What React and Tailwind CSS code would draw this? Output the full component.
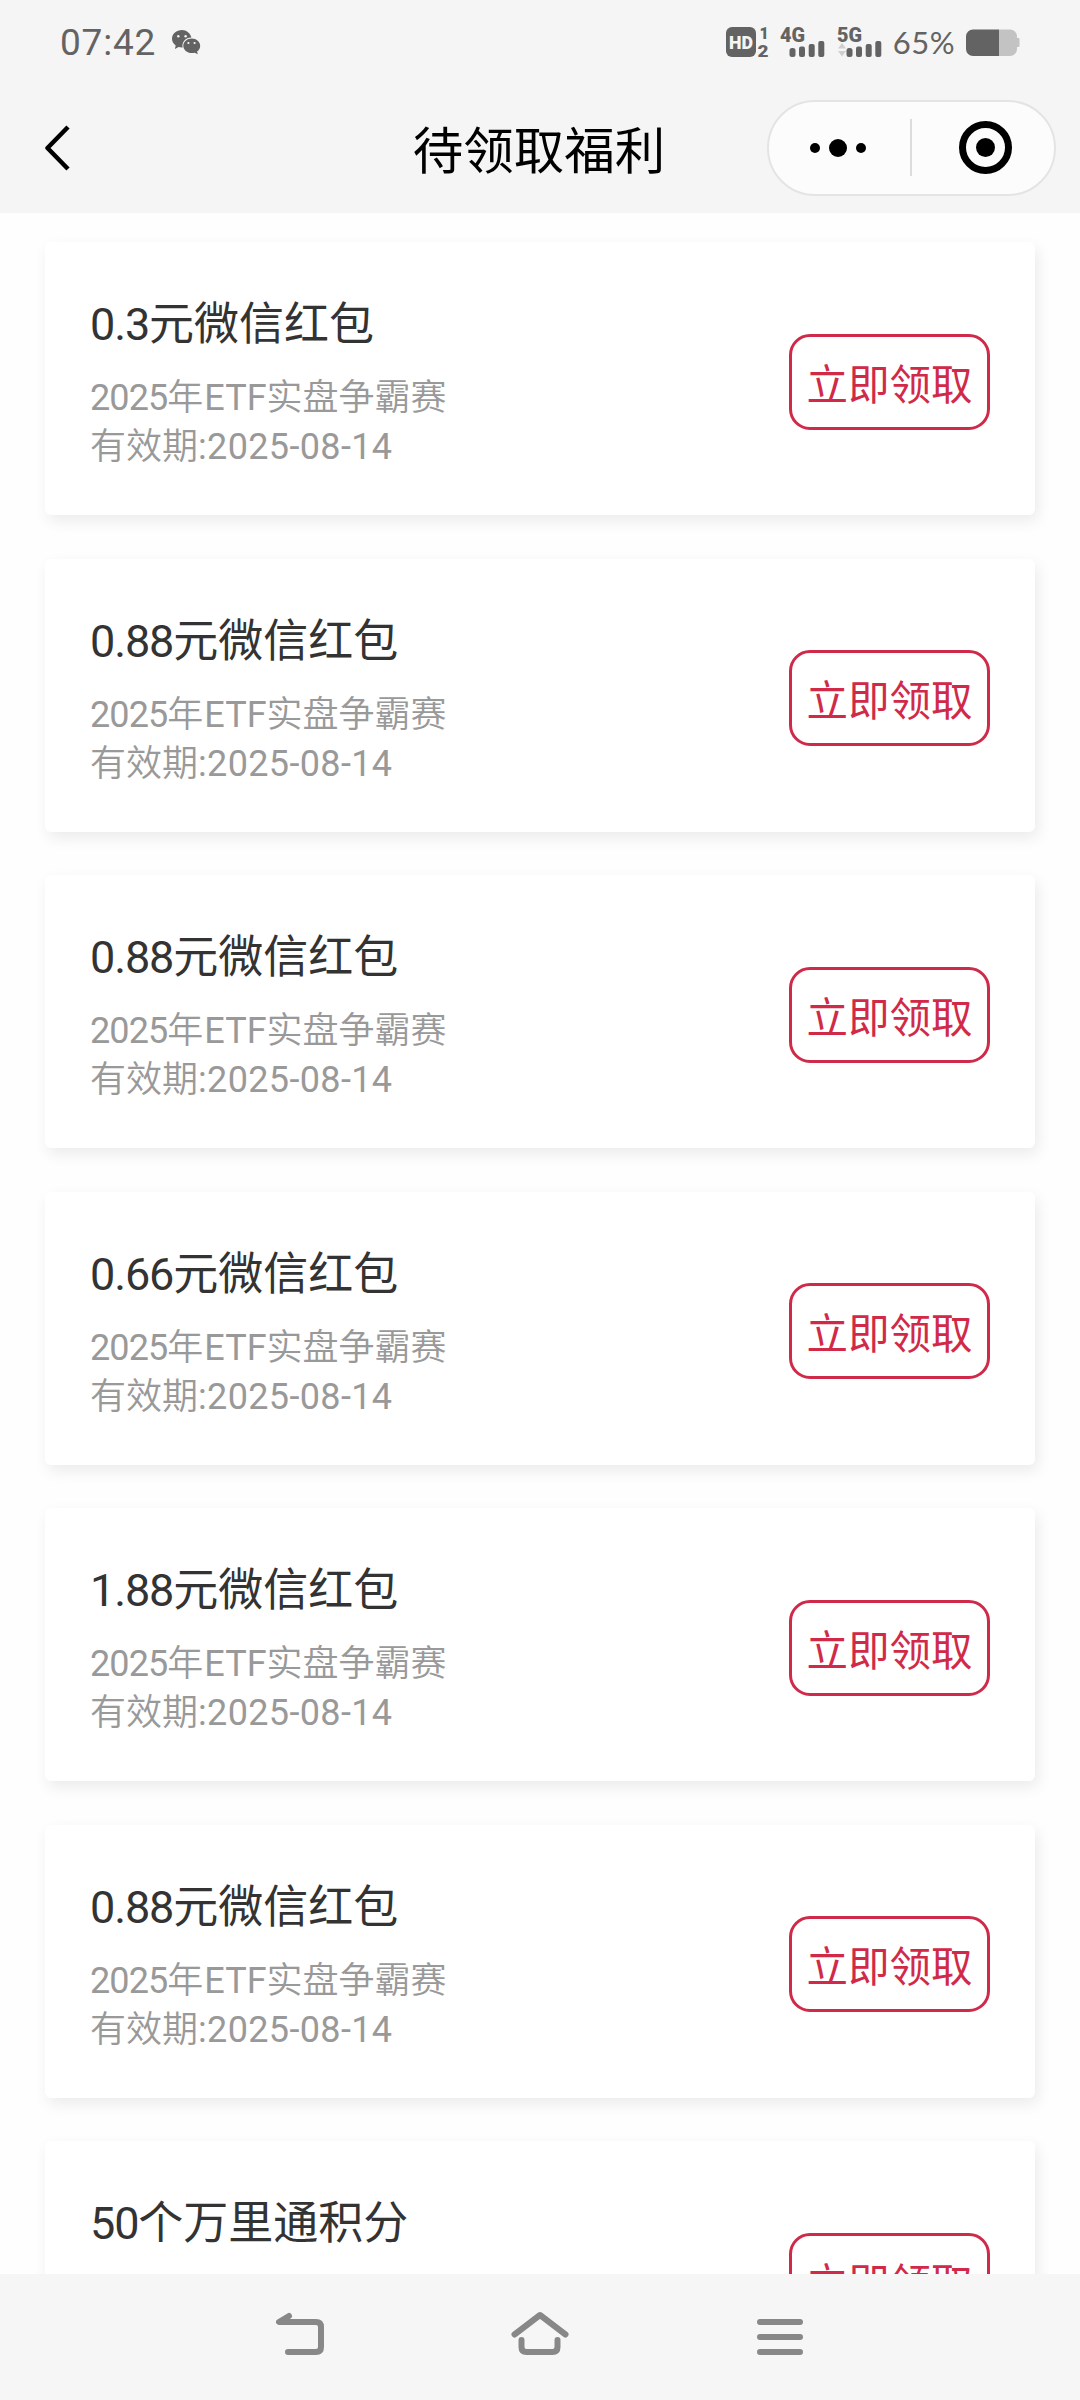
import React from 'react';

const rewards = [
  { id: 1, title: '0.3元微信红包' },
  { id: 2, title: '0.88元微信红包' },
  { id: 3, title: '0.88元微信红包' },
  { id: 4, title: '0.66元微信红包' },
  { id: 5, title: '1.88元微信红包' },
  { id: 6, title: '0.88元微信红包' },
  { id: 7, title: '50个万里通积分' },
];

// Digits and latin letters use a narrower face than the Chinese text
const Mixed = ({ text, latin }) =>
  text.split(/([0-9.:-]+|[A-Z]+)/).filter(Boolean).map((part, i) =>
    /^[A-Z]/.test(part) ? (
      <span key={i} className="pl-[1px] font-['Roboto'] font-normal leading-none">{part}</span>
    ) : /^[0-9.:-]/.test(part) ? (
      <span key={i} className={`font-['Roboto'] leading-none ${latin}`}>{part}</span>
    ) : (
      <span key={i}>{part}</span>
    )
  );

const WeChatIcon = () => (
  <svg width="29" height="25" viewBox="0 0 29 25" className="ml-[16px]">
    <path fill="#636363" d="M10 0C4.500 0 0 3.900 0 8.800c0 2.700 1.400 5 3.700 6.700L2.900 19l3.700-2c1.100.3 2.200.5 3.400.5h.6C9.500 12 13.500 7.600 19.400 7.500 18.400 3.200 14.500 0 10 0z" />
    <path fill="#636363" d="M19.800 8.500c-4.800 0-8.500 3.300-8.500 7.300s3.700 7.300 8.500 7.300c1 0 2-.2 2.900-.4l3.100 1.600-.7-2.700c1.900-1.400 3.100-3.400 3.100-5.800 0-4-3.800-7.300-8.400-7.300z" />
    <g fill="#f5f5f5">
      <circle cx="6.300" cy="6.300" r="1.200" />
      <circle cx="13.600" cy="6.300" r="1.200" />
      <circle cx="16.400" cy="13" r="1.100" />
      <circle cx="22.600" cy="13" r="1.100" />
    </g>
  </svg>
);

const HdIcon = () => (
  <svg width="44" height="32" viewBox="0 0 44 32" fill="#636363" fontFamily="Roboto, sans-serif" fontWeight="900" className="overflow-visible">
    <rect x="0" y="1" width="30" height="30" rx="6" />
    <text x="3" y="22.500" fontSize="18" fill="#f5f5f5" textLength="24" lengthAdjust="spacingAndGlyphs">HD</text>
    <text x="33.500" y="12.500" fontSize="16" fontWeight="900">1</text>
    <text x="31.500" y="30.500" fontSize="16" fontWeight="900" textLength="11" lengthAdjust="spacingAndGlyphs">2</text>
  </svg>
);

const Signal = ({ label, data }) => (
  <svg width="46" height="32" viewBox="0 0 46 32" fill="#636363" className="overflow-visible">
    <text x="0" y="15.500" fontSize="20" fontWeight="900" fontFamily="Roboto, sans-serif" textLength="25" lengthAdjust="spacingAndGlyphs">{label}</text>
    {data && <path fill="#cfcfcf" d="M1 22.500l4-5.500 4 5.500zM1 25h8l-4 5.500z" />}
    <rect x="9.500" y="22" width="6" height="9" rx="2.500" />
    <rect x="19" y="20.500" width="6" height="10.500" rx="2" />
    <rect x="28.700" y="18" width="6" height="13" rx="2" />
    <rect x="38.300" y="15" width="6" height="16" rx="2" />
  </svg>
);

const BatteryIcon = () => (
  <svg width="54" height="28" viewBox="0 0 54 28" className="ml-[11px] mt-[2px]">
    <path fill="#c3c3c3" d="M33 .5h11a7 7 0 0 1 7 7v1.500h1.500q1 0 1 1v7q0 1-1 1H51v2a7 7 0 0 1-7 7H33z" />
    <path fill="#636363" d="M7 .5h26v26.500H7a7 7 0 0 1-7-7V7.500a7 7 0 0 1 7-7z" />
  </svg>
);

const StatusBar = () => (
  <div className="flex h-[84px] items-center pl-[60px] pr-[60px] text-[#636363]">
    <span className="font-['Roboto'] text-[37px] leading-none tracking-[0.8px]">07:42</span>
    <WeChatIcon />
    <div className="ml-auto flex items-center">
      <HdIcon />
      <div className="ml-[10px]"><Signal label="4G" /></div>
      <div className="ml-[11px]"><Signal label="5G" data /></div>
      <span className="ml-[10px] mt-[1px] font-['Lato'] text-[31px] leading-none tracking-[0.5px]">65%</span>
      <BatteryIcon />
    </div>
  </div>
);

const NavBar = () => (
  <div className="grid h-[129px] grid-cols-[349px_1fr_349px] items-center">
    <svg width="26" height="46" viewBox="0 0 26 46" fill="none" stroke="#000" strokeWidth="4.500" className="mb-[1px] ml-[45px]">
      <path d="M23 2L2.500 23 23 44" strokeLinejoin="round" />
    </svg>
    <h1 className="mb-[3px] mr-[2px] text-center text-[50.500px] leading-[64px] text-black">待领取福利</h1>
    <div className="mb-[2px] ml-[36px] flex h-[96px] w-[289px] items-center rounded-full border-2 border-[#e4e4e4] bg-[#fcfcfc]">
      <div className="flex w-[141px] items-center justify-center gap-[9px] pr-[3px]">
        <span className="size-[10px] rounded-full bg-black" />
        <span className="size-[18px] rounded-full bg-black" />
        <span className="size-[10px] rounded-full bg-black" />
      </div>
      <span className="h-[57px] w-[2px] bg-[#dcdcdc]" />
      <div className="flex flex-1 justify-center pl-[4px]">
        <span className="flex size-[53px] items-center justify-center rounded-full border-[7px] border-black">
          <span className="size-[19px] rounded-full bg-black" />
        </span>
      </div>
    </div>
  </div>
);

const RewardCard = ({ title }) => (
  <div className="flex h-[273px] shrink-0 items-center justify-between rounded-[6px] bg-white px-[45px] shadow-[3px_6px_15px_rgba(0,0,0,0.08)]">
    <div>
      <h2 className="mb-[17px] text-[45px] leading-[64px] text-[#333]">
        <Mixed text={title} latin="font-[450] tracking-[-0.025em]" />
      </h2>
      <p className="text-[36px] font-[350] leading-[49px] text-[#999]">
        <Mixed text="2025年ETF实盘争霸赛" latin="font-normal tracking-[-0.025em]" />
      </p>
      <p className="text-[36px] font-[350] leading-[49px] text-[#999]">
        <Mixed text="有效期:2025-08-14" latin="font-normal tracking-[0.01em]" />
      </p>
    </div>
    <button className="mt-[6px] h-[96px] w-[201px] rounded-[21px] border-3 border-[#cf2a49] pt-[2px] text-[41.500px] leading-none text-[#d12a49]">
      立即领取
    </button>
  </div>
);

const BottomBar = () => (
  <div className="flex h-[126px] items-start gap-[187px] bg-[#f6f6f6] pl-[276px] pt-[37px]">
    <svg width="48" height="46" viewBox="0 0 48 46" fill="none" stroke="#888" strokeWidth="6" strokeLinecap="round" strokeLinejoin="round">
      <path d="M13 5L3 11h37q5 0 5 5v20q0 5-5 5H12" />
    </svg>
    <svg width="58" height="46" viewBox="0 0 58 46" fill="none" stroke="#888" strokeWidth="6" strokeLinecap="round" strokeLinejoin="round">
      <path d="M3.500 23.500L29 4l25.500 19.500M10.500 29v7q0 5 5 5h26q5 0 5-5v-7" />
    </svg>
    <svg width="46" height="46" viewBox="0 0 46 46" fill="none" stroke="#888" strokeWidth="6" strokeLinecap="round" className="ml-px">
      <path d="M3 11h40M3 26h40M3 41h40" />
    </svg>
  </div>
);

const App = () => {
  return (
    <div className="flex h-[2400px] w-[1080px] flex-col overflow-hidden bg-white font-['Noto_Sans_CJK_SC',sans-serif]">
      <header className="h-[213px] shrink-0 bg-[#f5f5f5]">
        <StatusBar />
        <NavBar />
      </header>
      <main className="flex min-h-0 flex-1 flex-col gap-[43.500px] overflow-hidden bg-[#fefefe] px-[45px] pt-[29px]">
        {rewards.map((item) => (
          <RewardCard key={item.id} title={item.title} />
        ))}
      </main>
      <BottomBar />
    </div>
  );
};

export default App;
